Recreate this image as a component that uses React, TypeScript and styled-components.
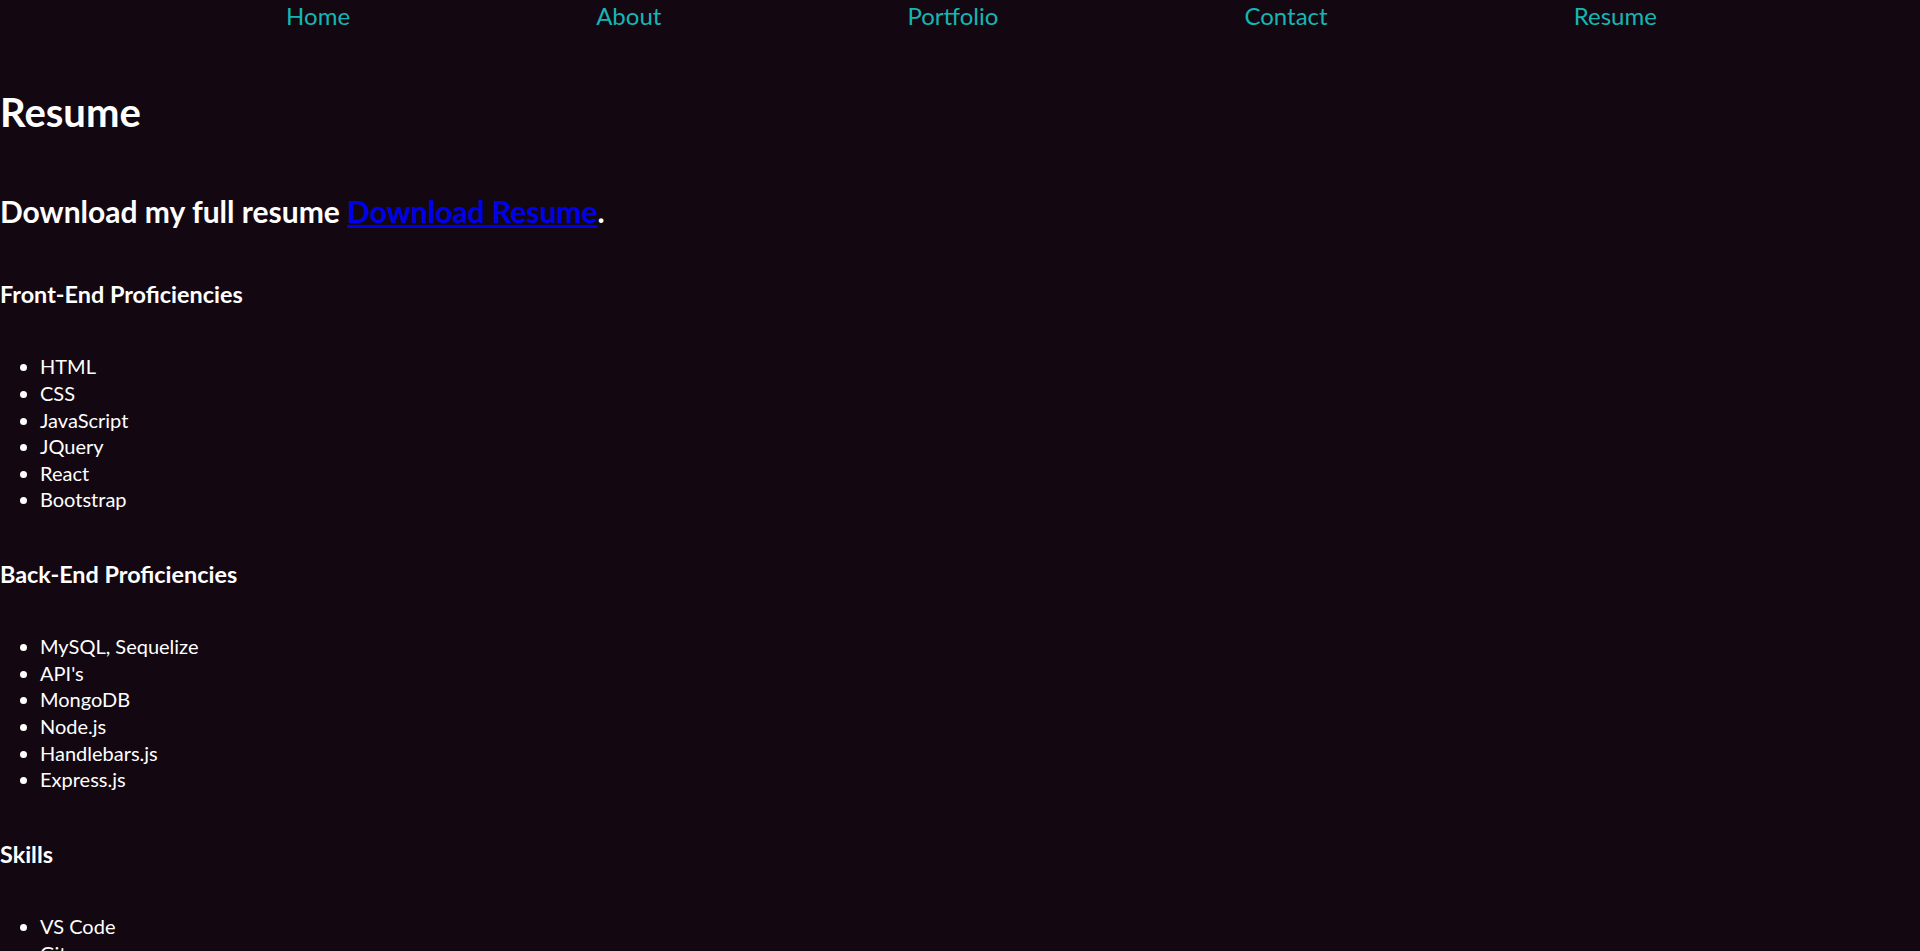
import { FC } from 'react';
import styled, { createGlobalStyle } from 'styled-components';

const GlobalStyle = createGlobalStyle`
  html,
  body {
    margin: 0;
    padding: 0;
    background: #130811;
  }

  body {
    font-family: Lato, 'Open Sans', sans-serif;
    font-size: 20px;
    line-height: 1.33;
    color: #ffffff;
  }
`;

const navLinks = ['Home', 'About', 'Portfolio', 'Contact', 'Resume'];

const frontEnd = ['HTML', 'CSS', 'JavaScript', 'JQuery', 'React', 'Bootstrap'];

const backEnd = [
  'MySQL, Sequelize',
  "API's",
  'MongoDB',
  'Node.js',
  'Handlebars.js',
  'Express.js',
];

const skills = [
  'VS Code',
  'Git',
  'GitHub',
  'Heroku',
  'Insomnia',
  'MySQL Workbench',
  'npm',
  'Command Line',
  'Agile',
  'Responsive Design',
];

const NavBar = styled.ul`
  display: flex;
  justify-content: space-evenly;
  margin: 0 0 24px;
  padding: 0 17px 0 40px;
  list-style: none;
  font-size: 24px;
`;

const NavItem = styled.li`
  line-height: 32px;
`;

const NavLink = styled.a`
  color: #14b6b4;
  text-decoration: none;
`;

const Page = styled.main`
  display: flex;
  flex-direction: column;
  align-items: flex-start;
`;

const Title = styled.h1`
  margin: 30px 0 26.8px;
  font-size: 40px;
  line-height: 53px;
`;

const Download = styled.h2`
  margin: 24.9px 0;
  font-size: 30px;
  line-height: 40px;
`;

const DownloadLink = styled.a`
  color: #0000ee;
  text-decoration: underline;
`;

const SectionTitle = styled.h3`
  margin: 23.4px 0;
  font-size: 23.4px;
  line-height: 31px;
`;

const List = styled.ul`
  margin: 20px 0 22.5px;
  padding-left: 40px;
  list-style: disc;
`;

const Item = styled.li`
  line-height: 26.6px;
`;

const Section: FC<{ title: string; items: string[] }> = ({ title, items }) => (
  <>
    <SectionTitle>{title}</SectionTitle>
    <List>
      {items.map((item) => (
        <Item key={item}>{item}</Item>
      ))}
    </List>
  </>
);

const App: FC = () => (
  <>
    <GlobalStyle />
    <nav>
      <NavBar>
        {navLinks.map((link) => (
          <NavItem key={link}>
            <NavLink href={`#${link.toLowerCase()}`}>{link}</NavLink>
          </NavItem>
        ))}
      </NavBar>
    </nav>

    <Page>
      <Title>Resume</Title>
      <Download>
        Download my full resume{' '}
        <DownloadLink href="#resume">Download Resume</DownloadLink>.
      </Download>

      <Section title="Front-End Proficiencies" items={frontEnd} />
      <Section title="Back-End Proficiencies" items={backEnd} />
      <Section title="Skills" items={skills} />
    </Page>
  </>
);

export default App;
